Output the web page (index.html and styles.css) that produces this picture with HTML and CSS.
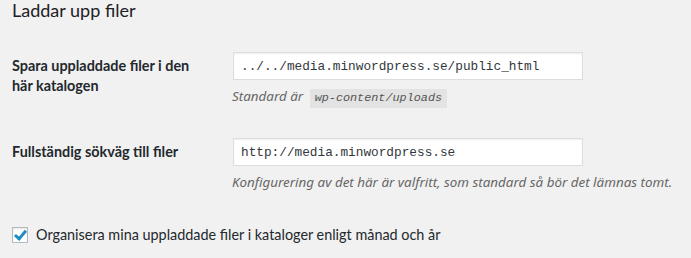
FILE: index.html
```html
<!DOCTYPE html>
<html lang="sv">
  <head>
    <meta charset="UTF-8" />
    <meta name="viewport" content="width=device-width, initial-scale=1.0" />
    <title>Mediainställningar</title>
    <link rel="stylesheet" href="styles.css">
  </head>
  <body>
    <h2 class="title">Laddar upp filer</h2>

    <div class="form-table">
      <div class="row">
        <label class="row-label" for="upload_path">Spara uppladdade filer i den här katalogen</label>
        <div class="row-field">
          <input id="upload_path" class="text-input" type="text" value="../../media.minwordpress.se/public_html" />
          <p class="description">Standard är <code>wp-content/uploads</code></p>
        </div>
      </div>

      <div class="row">
        <label class="row-label" for="upload_url_path">Fullständig sökväg till filer</label>
        <div class="row-field">
          <input id="upload_url_path" class="text-input" type="text" value="http://media.minwordpress.se" />
          <p class="description">Konfigurering av det här är valfritt, som standard så bör det lämnas tomt.</p>
        </div>
      </div>
    </div>

    <label class="check-row" for="uploads_use_yearmonth_folders">
      <input id="uploads_use_yearmonth_folders" class="checkbox" type="checkbox" checked />
      <span>Organisera mina uppladdade filer i kataloger enligt månad och år</span>
    </label>
  </body>
</html>
```

FILE: styles.css
```css
body {
  background: #f1f1f1;
  margin: 0;
  padding: 0 12px;
  color: #23282d;
  font-family: Lato, "Noto Sans", sans-serif;
  font-size: 14.4px;
}

.title {
  margin: 0;
  font-size: 18px;
  font-weight: 400;
  line-height: 20px;
  height: 37px;
  color: #1d2125;
}

.row {
  display: grid;
  grid-template-columns: 220px 1fr;
  padding: 15px 0;
}

.row-label {
  font-weight: 700;
  line-height: 20px;
  padding-top: 4px;
  width: 200px;
}

.row-field {
  display: flex;
  flex-direction: column;
  align-items: flex-start;
}

.text-input {
  box-sizing: border-box;
  width: 350px;
  height: 28px;
  margin: 0 0 0 1px;
  padding: 0 7px;
  border: 1px solid #ddd;
  box-shadow: inset 0 1px 2px rgba(0, 0, 0, 0.07);
  background: #fff;
  color: #32373c;
  font-family: "Liberation Mono", monospace;
  font-size: 12.75px;
  outline: none;
}

.description {
  margin: 6px 0 0;
  color: #666;
  font-family: "Noto Sans", sans-serif;
  font-size: 13.4px;
  font-style: italic;
  line-height: 20px;
}

code {
  background: #e3e3e3;
  padding: 2px 5px 3px;
  margin-left: 3px;
  font-family: "Liberation Mono", monospace;
  font-size: 11.8px;
  font-style: italic;
  color: #555;
}

.check-row {
  display: flex;
  align-items: center;
  gap: 8px;
  margin-top: 19px;
}

.checkbox {
  appearance: none;
  box-sizing: border-box;
  width: 16px;
  height: 16px;
  margin: 0;
  border: 1px solid #b4b9be;
  background: #fff;
  box-shadow: inset 0 1px 2px rgba(0, 0, 0, 0.1);
  position: relative;
}

.checkbox:checked::before {
  content: "";
  position: absolute;
  left: 4px;
  top: 0px;
  width: 4px;
  height: 9px;
  border: solid #1e8cbe;
  border-width: 0 3px 3px 0;
  transform: rotate(40deg);
}
```
